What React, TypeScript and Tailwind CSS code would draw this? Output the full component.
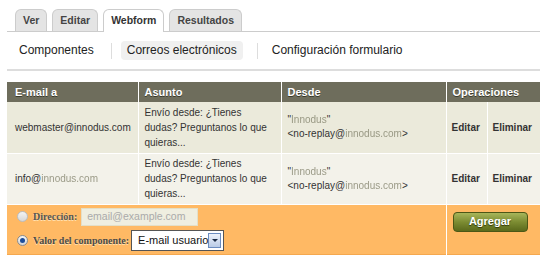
type EmailRow = {
  to: string;
  toHidden?: string;
  subject: string;
  fromName: string;
  fromDomain: string;
};

const rows: EmailRow[] = [
  {
    to: "webmaster@innodus.com",
    subject: "Envío desde: ¿Tienes dudas? Preguntanos lo que quieras...",
    fromName: "Innodus",
    fromDomain: "innodus.com",
  },
  {
    to: "info@",
    toHidden: "innodus.com",
    subject: "Envío desde: ¿Tienes dudas? Preguntanos lo que quieras...",
    fromName: "Innodus",
    fromDomain: "innodus.com",
  },
];

const tabs = ["Ver", "Editar", "Webform", "Resultados"];

// masked text in the screenshot, drawn as blurred grey text
function Scrambled({ text }: { text: string }) {
  return (
    <span className="inline-block text-[#7d7d66] opacity-75 blur-[0.7px]">
      {text}
    </span>
  );
}

export default function App() {
  return (
    <div className="h-[262px] w-[550px] bg-white pl-[7px] pr-[10px] pt-[9px] font-['Liberation_Sans',Arial,sans-serif] text-[#333]">
      <ul className="flex h-[23px] items-end gap-[5px] border-b border-[#ccc] pl-[8px]">
        {tabs.map((tab) => (
          <li
            className={
              tab === "Webform"
                ? "-mb-px flex h-[23px] items-center rounded-t-[6px] border border-b-0 border-[#ccc] bg-white px-[7px] text-[10.5px] font-bold"
                : "flex h-[22px] items-center rounded-t-[6px] border border-b-0 border-[#ccc] bg-[#e4e4e4] px-[7px] text-[10.5px] font-bold text-[#444]"
            }
            key={tab}
          >
            {tab}
          </li>
        ))}
      </ul>

      <div className="flex h-[39px] items-center border-b-2 border-[#ddd] pl-[4px] text-[12px] leading-[19px] text-[#222]">
        <span className="px-[8px]">Componentes</span>
        <span className="mx-[9px] h-[16px] w-px bg-[#ddd]" />
        <span className="rounded-[4px] bg-[#f0f0f0] px-[6px]">
          Correos electrónicos
        </span>
        <span className="mx-[14px] h-[16px] w-px bg-[#ddd]" />
        <span>Configuración formulario</span>
      </div>

      <table className="mt-[11px] w-[533px] table-fixed border-collapse text-[10px] leading-[15px]">
        <colgroup>
          <col className="w-[131px]" />
          <col className="w-[143px]" />
          <col className="w-[165px]" />
          <col className="w-[41px]" />
          <col className="w-[53px]" />
        </colgroup>
        <thead>
          <tr className="h-[20px] bg-[#6e6d5c] text-left text-[11px] font-bold text-white [text-shadow:0_1px_0_#3a3a2c]">
            <th className="border-r border-white px-[8px]">E-mail a</th>
            <th className="border-r border-white px-[6px]">Asunto</th>
            <th className="border-r border-white px-[6px]">Desde</th>
            <th className="px-[6px]" colSpan={2}>
              Operaciones
            </th>
          </tr>
        </thead>
        <tbody>
          {rows.map((row, index) => (
            <tr
              className={
                index === 0
                  ? "h-[51px] border-b border-white bg-[#ebeadb]"
                  : "h-[51px] border-b border-white bg-[#f3f2ea]"
              }
              key={index}
            >
              <td className="border-r border-white px-[8px] text-[#333]">
                {row.to}
                {row.toHidden ? <Scrambled text={row.toHidden} /> : null}
              </td>
              <td className="border-r border-white px-[6px] align-middle text-[#333]">
                {row.subject}
              </td>
              <td className="border-r border-white px-[6px] text-[#333]">
                <div className="leading-[14px]">
                  "<Scrambled text={row.fromName} />"
                </div>
                <div className="leading-[14px]">
                  &lt;no-replay@
                  <Scrambled text={row.fromDomain} />
                  &gt;
                </div>
              </td>
              <td className="border-r border-white px-[5px] font-bold text-[#333]">
                Editar
              </td>
              <td className="px-[5px] font-bold text-[#333]">Eliminar</td>
            </tr>
          ))}
          <tr className="h-[50px] border-b border-[#f5a84f] bg-[#ffb964]">
            <td className="border-r border-white px-[10px]" colSpan={3}>
              <div className="flex flex-col gap-[4px] font-['Liberation_Serif',serif] text-[10px] font-semibold text-[#555] [text-shadow:0_1px_0_#ffe0b0]">
                <label className="flex items-center gap-[4px]">
                  <span className="mr-px h-[11px] w-[11px] rounded-full border border-[#bbb] bg-gradient-to-b from-[#f4f4f4] to-[#d8d8d8]" />
                  <span>Dirección:</span>
                  <span className="flex h-[18px] w-[117px] items-center border border-[#e3dfc8] bg-[#efeee0] px-[5px] font-['Liberation_Sans',sans-serif] text-[10.5px] font-normal text-[#aaa] [text-shadow:none]">
                    email@example.com
                  </span>
                </label>
                <label className="flex items-center gap-[5px]">
                  <span className="flex h-[11px] w-[11px] items-center justify-center rounded-full border border-[#8a8a8a] bg-gradient-to-b from-[#f6f6f6] to-[#d4d4d4]">
                    <span className="h-[5px] w-[5px] rounded-full bg-[#1c4e9c]" />
                  </span>
                  <span className="text-[#4a4a4a]">Valor del componente:</span>
                  <span className="ml-[-3px] flex h-[21px] w-[93px] items-center justify-between whitespace-nowrap border border-[#555] bg-white pl-[6px] pr-[2px] font-['Liberation_Sans',sans-serif] text-[11px] font-normal text-[#111] [text-shadow:none]">
                    E-mail usuario
                    <span className="flex h-[15px] w-[13px] shrink-0 items-center justify-center border border-[#6a8cc0] bg-gradient-to-b from-[#eef3fb] to-[#b9cbe6]">
                      <span className="h-0 w-0 border-x-[3px] border-t-[3px] border-x-transparent border-t-[#1b2a44]" />
                    </span>
                  </span>
                </label>
              </div>
            </td>
            <td className="px-[6px] align-top" colSpan={2}>
              <button
                className="mt-[7px] flex h-[20px] w-[75px] items-center justify-center rounded-[4px] border border-[#4c5716] bg-gradient-to-b from-[#a8b65a] via-[#7c8c32] to-[#5b6a1c] text-[11px] font-bold text-white [text-shadow:0_1px_1px_#2e3608]"
                type="button"
              >
                Agregar
              </button>
            </td>
          </tr>
        </tbody>
      </table>
    </div>
  );
}
